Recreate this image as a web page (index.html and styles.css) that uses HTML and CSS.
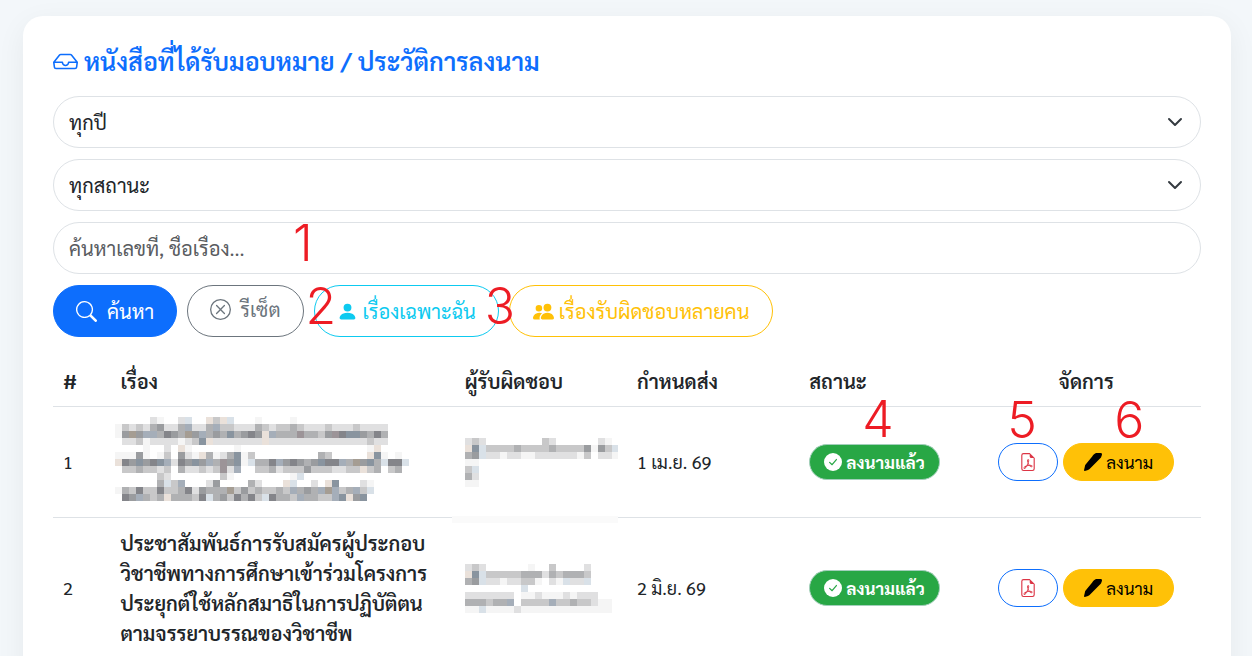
FILE: index.html
```html
<!DOCTYPE html>
<html lang="th">
<head>
    <meta charset="UTF-8">
    <meta name="viewport" content="width=device-width, initial-scale=1.0">
    <title>หนังสือที่ได้รับมอบหมาย</title>
    <link rel="stylesheet" href="styles.css">
</head>
<body>
<!-- Icons -->
<svg class="sprite" aria-hidden="true">
    <symbol id="i-inbox" viewBox="0 0 16 16"><path d="M4.98 4a.5.5 0 0 0-.39.188L1.54 8H6a.5.5 0 0 1 .5.5 1.5 1.5 0 1 0 3 0A.5.5 0 0 1 10 8h4.46l-3.05-3.812A.5.5 0 0 0 11.02 4zm9.954 5H10.45a2.5 2.5 0 0 1-4.9 0H1.066l.32 2.562a.5.5 0 0 0 .497.438h12.234a.5.5 0 0 0 .496-.438zM3.809 3.563A1.5 1.5 0 0 1 4.981 3h6.038a1.5 1.5 0 0 1 1.172.563l3.7 4.625a.5.5 0 0 1 .105.374l-.39 3.124A1.5 1.5 0 0 1 14.117 13H1.883a1.5 1.5 0 0 1-1.489-1.314l-.39-3.124a.5.5 0 0 1 .106-.374z"/></symbol>
    <symbol id="i-search" viewBox="0 0 16 16"><path d="M11.742 10.344a6.5 6.5 0 1 0-1.397 1.398h-.001q.044.06.098.115l3.85 3.85a1 1 0 0 0 1.415-1.414l-3.85-3.85a1 1 0 0 0-.115-.1zM12 6.5a5.5 5.5 0 1 1-11 0 5.5 5.5 0 0 1 11 0"/></symbol>
    <symbol id="i-x-circle" viewBox="0 0 16 16"><path d="M8 15A7 7 0 1 1 8 1a7 7 0 0 1 0 14m0 1A8 8 0 1 0 8 0a8 8 0 0 0 0 16"/><path d="M4.646 4.646a.5.5 0 0 1 .708 0L8 7.293l2.646-2.647a.5.5 0 0 1 .708.708L8.707 8l2.647 2.646a.5.5 0 0 1-.708.708L8 8.707l-2.646 2.647a.5.5 0 0 1-.708-.708L7.293 8 4.646 5.354a.5.5 0 0 1 0-.708"/></symbol>
    <symbol id="i-person" viewBox="0 0 16 16"><path d="M3 14s-1 0-1-1 1-4 6-4 6 3 6 4-1 1-1 1zm5-6a3 3 0 1 0 0-6 3 3 0 0 0 0 6"/></symbol>
    <symbol id="i-people" viewBox="0 0 16 16"><path d="M7 14s-1 0-1-1 1-4 5-4 5 3 5 4-1 1-1 1zm4-6a3 3 0 1 0 0-6 3 3 0 0 0 0 6m-5.784 6A2.24 2.24 0 0 1 5 13c0-1.355.68-2.75 1.936-3.72A6.3 6.3 0 0 0 5 9c-4 0-5 3-5 4s1 1 1 1zM4.5 8a2.5 2.5 0 1 0 0-5 2.5 2.5 0 0 0 0 5"/></symbol>
    <symbol id="i-check" viewBox="0 0 16 16"><circle cx="8" cy="8" r="8"/><path d="M5 8.3 7.2 10.4 11 5.8" fill="none" stroke="#28a745" stroke-width="1.1" stroke-linecap="round" stroke-linejoin="round"/></symbol>
    <symbol id="i-pdf" viewBox="0 0 16 16"><path d="M14 14V4.5L9.5 0H4a2 2 0 0 0-2 2v12a2 2 0 0 0 2 2h8a2 2 0 0 0 2-2M9.5 3A1.5 1.5 0 0 0 11 4.5h2V14a1 1 0 0 1-1 1H4a1 1 0 0 1-1-1V2a1 1 0 0 1 1-1h5.5z"/><path d="M4.603 14.087a.8.8 0 0 1-.438-.42c-.195-.388-.13-.776.08-1.102.198-.307.526-.568.897-.787a7.7 7.7 0 0 1 1.482-.645 20 20 0 0 0 1.062-2.227 7.3 7.3 0 0 1-.43-1.295c-.086-.4-.119-.796-.046-1.136.075-.354.274-.672.65-.823.192-.077.4-.12.602-.077a.7.7 0 0 1 .477.365c.088.164.12.356.127.538.007.188-.012.396-.047.614-.084.51-.27 1.134-.52 1.794a11 11 0 0 0 .98 1.686 5.8 5.8 0 0 1 1.334.05c.364.066.734.195.96.465.12.144.193.32.2.518.007.192-.047.382-.138.563a1.04 1.04 0 0 1-.354.416.86.86 0 0 1-.51.138c-.331-.014-.654-.196-.933-.417a5.7 5.7 0 0 1-.911-.95 11.7 11.7 0 0 0-1.997.406 11.3 11.3 0 0 1-1.02 1.51c-.292.35-.609.656-.927.787a.8.8 0 0 1-.58.029m1.379-1.901q-.25.115-.459.238c-.328.194-.541.383-.647.547-.094.145-.096.25-.04.361q.016.032.026.044l.035-.012c.137-.056.355-.235.635-.572a8 8 0 0 0 .45-.606m1.64-1.33a13 13 0 0 1 1.01-.193 12 12 0 0 1-.51-.858 21 21 0 0 1-.5 1.05m2.446.45q.226.245.435.41c.24.19.407.253.498.256a.1.1 0 0 0 .07-.015.3.3 0 0 0 .094-.125.44.44 0 0 0 .059-.2.1.1 0 0 0-.026-.063c-.052-.062-.2-.152-.518-.209a4 4 0 0 0-.612-.053zM8.078 7.8a7 7 0 0 0 .2-.828q.046-.282.038-.465a.6.6 0 0 0-.032-.198.5.5 0 0 0-.145.04c-.087.035-.158.106-.196.283-.04.192-.03.469.046.822q.036.167.09.346z"/></symbol>
    <symbol id="i-pen" viewBox="0 0 18 18"><path d="M0 17.3 1.2 12.1 8.2 3.6C9 2.4 10.2.6 12 0l4.8-.1c1 .2 1.4 1 1.1 2.2L17 4.6 5.6 16.1Q5 16.8 4 17L.8 18Q0 18 0 17.3z"/></symbol>
</svg>

<main class="card">
    <h1 class="title"><svg class="icon icon-lg"><use href="#i-inbox"/></svg>หนังสือที่ได้รับมอบหมาย / ประวัติการลงนาม</h1>

    <form class="filters">
        <select class="field" aria-label="ปี">
            <option>ทุกปี</option>
        </select>
        <select class="field" aria-label="สถานะ">
            <option>ทุกสถานะ</option>
        </select>
        <div class="marked">
            <input class="field" type="text" placeholder="ค้นหาเลขที่, ชื่อเรื่อง..." aria-label="ค้นหา">
            <span class="mark mark-input">1</span>
        </div>
        <div class="buttons">
            <button type="button" class="btn btn-search"><svg class="icon"><use href="#i-search"/></svg>ค้นหา</button>
            <button type="button" class="btn btn-reset"><svg class="icon"><use href="#i-x-circle"/></svg>รีเซ็ต</button>
            <div class="marked">
                <button type="button" class="btn btn-mine"><svg class="icon"><use href="#i-person"/></svg>เรื่องเฉพาะฉัน</button>
                <span class="mark mark-left">2</span>
            </div>
            <div class="marked">
                <button type="button" class="btn btn-shared"><svg class="icon"><use href="#i-people"/></svg>เรื่องรับผิดชอบหลายคน</button>
                <span class="mark mark-far">3</span>
            </div>
        </div>
    </form>

    <table class="list">
        <thead>
        <tr>
            <th class="col-no">#</th>
            <th class="col-title">เรื่อง</th>
            <th class="col-mid">ผู้รับผิดชอบ</th>
            <th class="col-mid">กำหนดส่ง</th>
            <th class="col-mid">สถานะ</th>
            <th class="col-act">จัดการ</th>
        </tr>
        </thead>
        <tbody>
        <tr>
            <td>1</td>
            <td><svg class="mosaic mosaic-title" id="title1" width="294" height="90"></svg></td>
            <td class="person"><svg class="mosaic" id="person1" width="153" height="49"></svg></td>
            <td>1 เม.ย. 69</td>
            <td>
                <div class="marked">
                    <span class="status"><svg class="icon icon-sm"><use href="#i-check"/></svg>ลงนามแล้ว</span>
                    <span class="mark mark-status">4</span>
                </div>
            </td>
            <td>
                <div class="actions">
                    <div class="marked">
                        <button type="button" class="act act-pdf" aria-label="PDF"><svg class="icon icon-sm"><use href="#i-pdf"/></svg></button>
                        <span class="mark mark-pdf">5</span>
                    </div>
                    <div class="marked">
                        <button type="button" class="act act-sign"><svg class="icon icon-sm"><use href="#i-pen"/></svg>ลงนาม</button>
                        <span class="mark mark-sign">6</span>
                    </div>
                </div>
            </td>
        </tr>
        <tr>
            <td>2</td>
            <td class="subject">ประชาสัมพันธ์การรับสมัครผู้ประกอบวิชาชีพทางการศึกษาเข้าร่วมโครงการประยุกต์ใช้หลักสมาธิในการปฏิบัติตนตามจรรยาบรรณของวิชาชีพ</td>
            <td><svg class="mosaic" id="person2" width="153" height="49"></svg></td>
            <td>2 มิ.ย. 69</td>
            <td>
                <span class="status"><svg class="icon icon-sm"><use href="#i-check"/></svg>ลงนามแล้ว</span>
            </td>
            <td>
                <div class="actions">
                    <button type="button" class="act act-pdf" aria-label="PDF"><svg class="icon icon-sm"><use href="#i-pdf"/></svg></button>
                    <button type="button" class="act act-sign"><svg class="icon icon-sm"><use href="#i-pen"/></svg>ลงนาม</button>
                </div>
            </td>
        </tr>
        </tbody>
    </table>
</main>

<script src="script.js"></script>
</body>
</html>
```
FILE: styles.css
```css
* {
    box-sizing: border-box;
}

body {
    margin: 0;
    padding: 16px 21px 0 23px;
    background-color: #f3f7fa;
    color: #212529;
    font-family: Sarabun, "Noto Sans Thai", "Noto Sans", sans-serif;
    font-size: 18px;
    line-height: 30px;
    overflow: hidden;
}

button, input, select {
    font: inherit;
    color: inherit;
}

.sprite {
    position: absolute;
    width: 0;
    height: 0;
}

/* Card */
.card {
    padding: 30px;
    background-color: #fff;
    border-radius: 20px;
    box-shadow: 0 8px 30px rgba(0, 0, 0, 0.06);
}

.title {
    display: flex;
    align-items: center;
    gap: 6px;
    margin: 0 0 20px;
    color: #0d6efd;
    font-size: 25px;
    font-weight: 600;
    line-height: 30px;
}

.icon {
    width: 21px;
    height: 21px;
    flex: none;
    fill: currentColor;
}

.icon-lg {
    width: 25px;
    height: 25px;
}

.icon-sm {
    width: 18px;
    height: 18px;
}

/* Filters */
.filters {
    display: flex;
    flex-direction: column;
    gap: 11px;
}

.field {
    display: block;
    width: 100%;
    height: 52px;
    padding: 0 15px;
    border: 1px solid #dee2e6;
    border-radius: 50px;
    background-color: #fff;
    font-size: 20px;
    appearance: none;
}

.field::placeholder {
    color: #595c5f;
}

select.field {
    background-image: url("data:image/svg+xml,%3csvg xmlns='http://www.w3.org/2000/svg' viewBox='0 0 16 16'%3e%3cpath fill='none' stroke='%23343a40' stroke-linecap='round' stroke-linejoin='round' stroke-width='2' d='m2 5 6 6 6-6'/%3e%3c/svg%3e");
    background-repeat: no-repeat;
    background-position: right 17px center;
    background-size: 16px 16px;
}

.buttons {
    display: flex;
    gap: 10px;
}

.btn {
    display: flex;
    align-items: center;
    gap: 5px;
    height: 52px;
    padding: 0 22px;
    border: 1px solid;
    border-radius: 50px;
    background-color: #fff;
    font-size: 20px;
    cursor: pointer;
}

.btn-search {
    gap: 10px;
    border-color: #0d6efd;
    background-color: #0d6efd;
    color: #fff;
}

.btn-reset {
    gap: 9px;
    padding-bottom: 4px;
    color: #6c757d;
}

.btn-mine {
    color: #0dcaf0;
}

.btn-shared {
    padding: 0 23px;
    color: #ffc107;
}

/* Red step numbers */
.marked {
    position: relative;
    width: fit-content;
}

.filters > .marked {
    width: auto;
}

.mark {
    position: absolute;
    color: #ed1c24;
    font-family: Inter, "Liberation Sans", sans-serif;
    font-size: 50px;
    font-weight: 300;
    line-height: 50px;
    pointer-events: none;
}

.mark-input {
    top: -4px;
    left: 240px;
}

.mark-left {
    top: -4px;
    left: -8px;
}

.mark-far {
    top: -4px;
    left: -24px;
}

.mark-status,
.mark-pdf,
.mark-sign {
    bottom: 36px;
}

.mark-status {
    left: 53px;
}

.mark-pdf {
    left: 9px;
}

.mark-sign {
    left: 51px;
}

/* Table */
.list {
    width: 100%;
    margin-top: 19px;
    border-collapse: collapse;
    table-layout: fixed;
}

.list th,
.list td {
    padding: 10px;
    border-bottom: 1px solid #dee2e6;
    text-align: left;
    vertical-align: middle;
}

.list th,
.list .subject {
    font-size: 20px;
    font-weight: 600;
}

.list .col-no {
    width: 5%;
}

.list .col-title {
    width: 30%;
}

.list .col-mid {
    width: 15%;
}

.list .col-act {
    width: 20%;
    text-align: center;
}

.mosaic {
    display: block;
}

.mosaic-title {
    margin-left: -5px;
}

.person {
    position: relative;
}

/* Pale strip over the row line */
.person::after {
    content: "";
    position: absolute;
    left: -3px;
    right: 9px;
    bottom: -6px;
    height: 7px;
    background-color: #fafafa;
}

.status {
    display: flex;
    align-items: center;
    gap: 4px;
    width: fit-content;
    height: 36px;
    padding: 0 14px;
    border: 1px solid #a3cfbb;
    border-radius: 50px;
    background-color: #28a745;
    color: #fff;
    font-size: 17px;
    font-weight: 700;
}

.actions {
    display: flex;
    justify-content: center;
    gap: 5px;
}

.act {
    display: flex;
    align-items: center;
    justify-content: center;
    gap: 4px;
    height: 38px;
    padding: 0 20px;
    border: 1px solid;
    border-radius: 50px;
    background-color: #fff;
    font-size: 17px;
    cursor: pointer;
}

.act-pdf {
    border-color: #0d6efd;
    color: #dc3545;
}

.act-sign {
    border-color: #ffc107;
    background-color: #ffc107;
    color: #000;
}
```
FILE: script.js
```js
// Pixelated names: one character per 7px cell
var cell = 7;
var shades = {
    "1": "#f5f5f5", "2": "#e0e0e1", "3": "#c8c8c9", "4": "#b0b1b3", "5": "#9a9c9f", "6": "#84858a",
    b: "#a5aeb9", d: "#89949f", w: "#a59d93", p: "#9c9498", k: "#eae1da", s: "#d9e1e8"
};

var mosaics = {
    title1: [
        "     21  2s  k3ks   1    1",
        "1323245224b224b332224323343222322232222",
        "15w5bb4654w5b454d4565kb444p4435p6dd5464",
        " 22312222123dk2222222k22222222222222322",
        "    1  2 k1      1                  1k",
        "11151 13 521k4124d13         43     kd1 1",
        "k65d56db265d5b4p5d1s446b56545d66b4w5d4s66s",
        " 3343323 422323p2b  334233353332233k34 34",
        "      32       31        1s",
        "      4s3b   25    42   ks  2 kd   21",
        "1436336334625444w35343343b454bwb34b3s",
        " 65b434k44436s4536463s6443b4433bdk5d"
    ],
    person1: [
        "232        32      21",
        "kds333343333433335153s",
        "45s221221122222213 221",
        "11",
        "3s",
        "42",
        "11"
    ],
    person2: [
        "232      1  3    2",
        "kds333334442434443",
        "45s22122331 21s22s",
        "        s",
        "2222222 11211121222",
        "444344b 3333b33433211",
        "11s111121111111111111"
    ]
};

function drawMosaic(id) {
    var svg = document.getElementById(id);
    mosaics[id].forEach(function(row, y) {
        row.split("").forEach(function(code, x) {
            if (!shades[code]) {
                return;
            }
            var rect = document.createElementNS("http://www.w3.org/2000/svg", "rect");
            rect.setAttribute("x", x * cell);
            rect.setAttribute("y", y * cell);
            rect.setAttribute("width", cell);
            rect.setAttribute("height", cell);
            rect.setAttribute("fill", shades[code]);
            rect.setAttribute("shape-rendering", "crispEdges");
            svg.appendChild(rect);
        });
    });
}

Object.keys(mosaics).forEach(drawMosaic);
```
